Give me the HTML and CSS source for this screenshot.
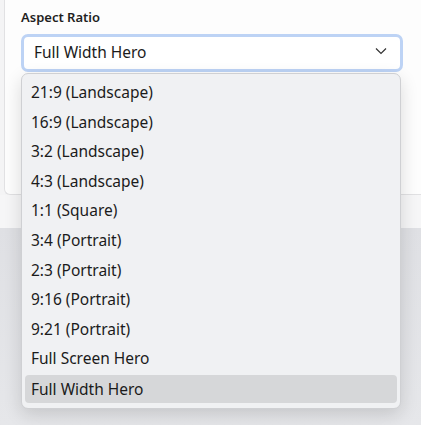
FILE: index.html
```html
<!DOCTYPE html>
<html>
<head>
<meta charset="utf-8">
<link rel="stylesheet" href="styles.css">
</head>
<body>
<div class="page">
  <div class="card">
    <div class="label">Aspect Ratio</div>
    <div class="select">
      <span class="value">Full Width Hero</span>
      <svg class="chev" width="12" height="8" viewBox="0 0 12 8"><path d="M1 1.5 L6 6.5 L11 1.5" fill="none" stroke="#333" stroke-width="1.2"/></svg>
    </div>
  </div>
  <div class="gap"></div>
  <div class="bottom"></div>
  <ul class="menu">
    <li>21:9 (Landscape)</li>
    <li>16:9 (Landscape)</li>
    <li>3:2 (Landscape)</li>
    <li>4:3 (Landscape)</li>
    <li>1:1 (Square)</li>
    <li>3:4 (Portrait)</li>
    <li>2:3 (Portrait)</li>
    <li>9:16 (Portrait)</li>
    <li>9:21 (Portrait)</li>
    <li>Full Screen Hero</li>
    <li class="active">Full Width Hero</li>
  </ul>
</div>
</body>
</html>
```
FILE: styles.css
```css
html, body {
  margin: 0;
  padding: 0;
}
body {
  width: 421px;
  height: 425px;
  overflow: hidden;
  background: #f4f4f5;
  font-family: "Noto Sans", "Open Sans", sans-serif;
  color: #1b1b1b;
}
.page {
  position: relative;
  height: 425px;
  display: flex;
  flex-direction: column;
}
.card {
  margin-left: 4px;
  height: 195px;
  box-sizing: border-box;
  background: #fdfdfd;
  border-left: 1px solid #e1e1e3;
  border-bottom: 1px solid #e1e1e3;
  border-bottom-left-radius: 6px;
  padding: 8px 0 0 16px;
}
.label {
  font-size: 13px;
  font-weight: 600;
  line-height: 18px;
  color: #1f1f1f;
}
.select {
  margin-top: 8px;
  width: 382px;
  height: 38px;
  box-sizing: border-box;
  border: 3px solid #bdd3f5;
  border-radius: 7px;
  background: #ffffff;
  display: flex;
  align-items: center;
  justify-content: space-between;
  padding: 0 13px 2px 10px;
}
.value {
  font-size: 15.5px;
}
.chev {
  margin-top: -2px;
}
.gap {
  height: 33px;
  background: #f6f6f7;
}
.bottom {
  flex: 1;
  background: linear-gradient(#dfe0e4, #e6e7ea);
}
.menu {
  position: absolute;
  left: 21px;
  top: 73px;
  width: 380px;
  box-sizing: border-box;
  margin: 0;
  padding: 4px 3px 5px;
  list-style: none;
  background: #f0f1f3;
  border: 1px solid #cfd0d3;
  border-radius: 7px;
  box-shadow: 0 6px 18px rgba(0, 0, 0, 0.14);
}
.menu li {
  height: 29.6px;
  line-height: 29px;
  padding-left: 6px;
  font-size: 15.5px;
  border-radius: 4px;
}
.menu li.active {
  background: #d6d7d9;
  height: 28px;
  margin-top: 1px;
}
```
